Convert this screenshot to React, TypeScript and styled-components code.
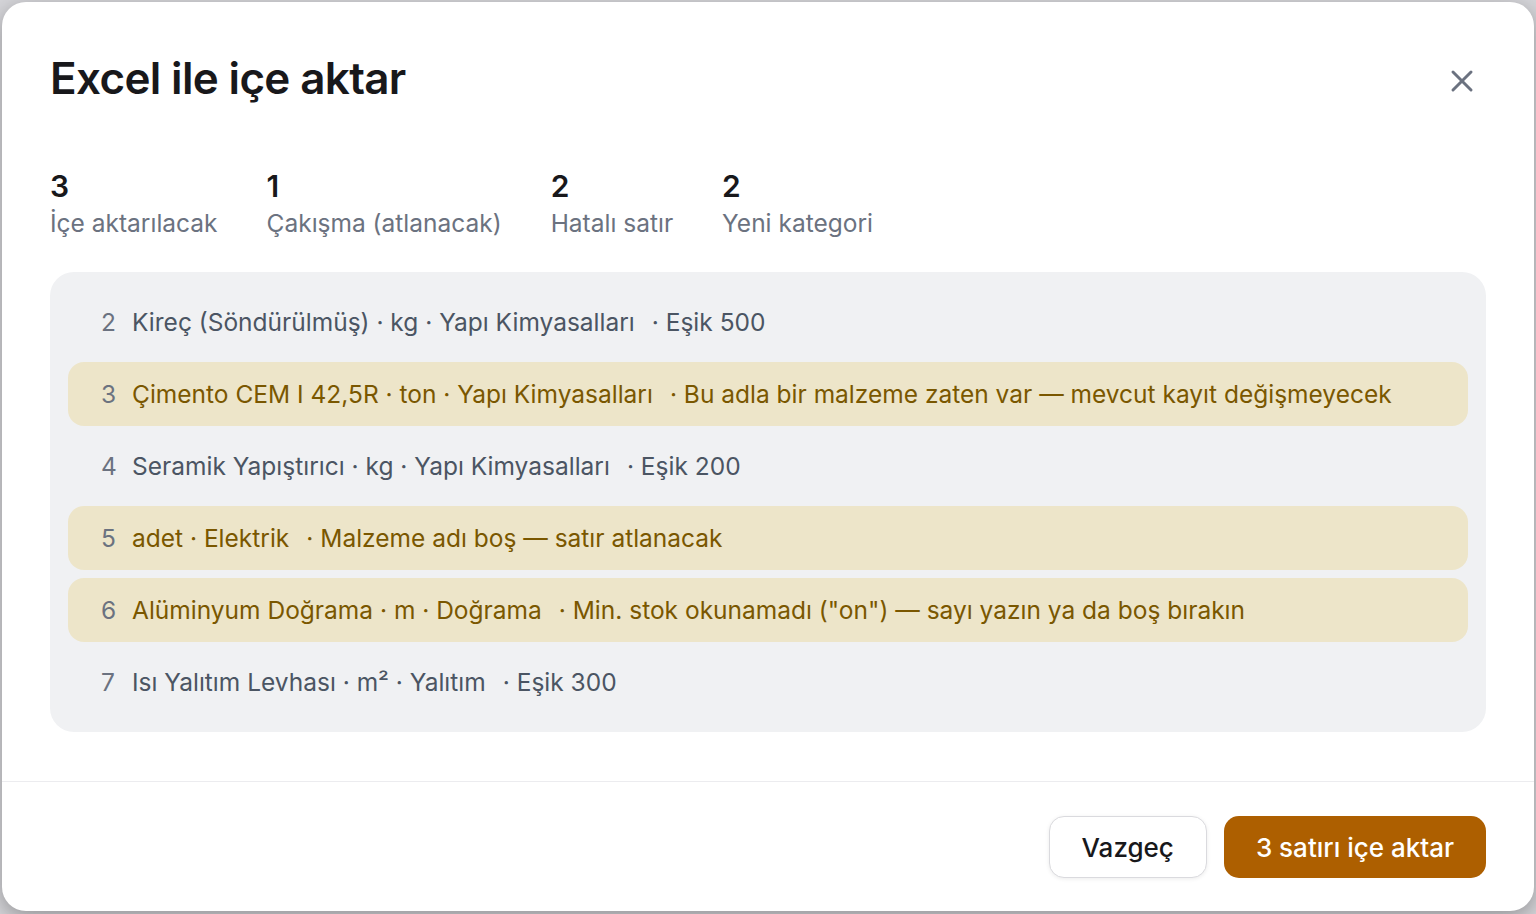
import React from 'react';
import styled, { createGlobalStyle } from 'styled-components';
import { X } from 'lucide-react';

const GlobalStyle = createGlobalStyle`
  html, body {
    margin: 0;
    padding: 0;
    height: 100%;
    overflow: hidden;
  }
  body {
    background: #d6d6da;
    font-family: Inter, "Noto Sans", "Liberation Sans", sans-serif;
    -webkit-font-smoothing: antialiased;
  }
  * { box-sizing: border-box; }
`;

interface Row {
  no: number;
  text: string;
  note: string;
  warn?: boolean;
}

const rows: Row[] = [
  { no: 2, text: 'Kireç (Söndürülmüş) · kg · Yapı Kimyasalları', note: '· Eşik 500' },
  {
    no: 3,
    text: 'Çimento CEM I 42,5R · ton · Yapı Kimyasalları',
    note: '· Bu adla bir malzeme zaten var — mevcut kayıt değişmeyecek',
    warn: true,
  },
  { no: 4, text: 'Seramik Yapıştırıcı · kg · Yapı Kimyasalları', note: '· Eşik 200' },
  { no: 5, text: 'adet · Elektrik', note: '· Malzeme adı boş — satır atlanacak', warn: true },
  {
    no: 6,
    text: 'Alüminyum Doğrama · m · Doğrama',
    note: '· Min. stok okunamadı ("on") — sayı yazın ya da boş bırakın',
    warn: true,
  },
  { no: 7, text: 'Isı Yalıtım Levhası · m² · Yalıtım', note: '· Eşik 300' },
];

const stats = [
  { value: 3, label: 'İçe aktarılacak' },
  { value: 1, label: 'Çakışma (atlanacak)' },
  { value: 2, label: 'Hatalı satır' },
  { value: 2, label: 'Yeni kategori' },
];

const Dialog = styled.div`
  margin: 2px 2px 0;
  height: 909px;
  background: #ffffff;
  border-radius: 24px;
  box-shadow: 0 6px 22px rgba(0, 0, 0, 0.32);
  display: flex;
  flex-direction: column;
  overflow: hidden;
`;

const Body = styled.div`
  padding: 51px 48px 0;
  display: flex;
  flex-direction: column;
`;

const Header = styled.div`
  display: flex;
  justify-content: space-between;
  align-items: center;
`;

const Title = styled.h2`
  margin: 0;
  font-size: 44px;
  line-height: 50px;
  font-weight: 600;
  letter-spacing: -0.015em;
  color: #18181b;
`;

const CloseButton = styled.button`
  display: flex;
  align-items: center;
  justify-content: center;
  width: 36px;
  height: 36px;
  margin: 6px 6px 0 0;
  padding: 0;
  border: none;
  background: transparent;
  color: #6b7280;
  cursor: pointer;
`;

const Stats = styled.div`
  display: flex;
  gap: 49px;
  margin-top: 64px;
`;

const Stat = styled.div`
  display: flex;
  flex-direction: column;
`;

const StatValue = styled.div`
  font-size: 30px;
  line-height: 38px;
  font-weight: 600;
  color: #18181b;
`;

const StatLabel = styled.div`
  margin-top: 2px;
  font-size: 24.5px;
  line-height: 32px;
  color: #6b7280;
`;

const List = styled.div`
  margin-top: 33px;
  padding: 18px;
  background: #f0f1f3;
  border-radius: 24px;
  display: flex;
  flex-direction: column;
  gap: 8px;
`;

const RowItem = styled.div<{ $warn?: boolean }>`
  height: 64px;
  display: flex;
  align-items: center;
  padding-left: 33px;
  border-radius: 16px;
  background: ${(p) => (p.$warn ? '#ede5c9' : 'transparent')};
  color: ${(p) => (p.$warn ? '#7a5700' : '#4b5563')};
  font-size: 24.5px;
  white-space: nowrap;
`;

const Num = styled.span`
  width: 16px;
  margin-right: 15px;
  color: #6b7280;
`;

const Note = styled.span`
  margin-left: 17px;
`;

const Footer = styled.div`
  margin-top: auto;
  border-top: 1px solid #ececef;
  padding: 34px 48px 33px;
  display: flex;
  justify-content: flex-end;
  gap: 17px;
`;

const Button = styled.button<{ $primary?: boolean }>`
  height: 62px;
  padding: 0 32px;
  border-radius: 15px;
  font-family: inherit;
  font-size: 26px;
  font-weight: 500;
  cursor: pointer;
  border: ${(p) => (p.$primary ? 'none' : '1.5px solid #dadade')};
  background: ${(p) => (p.$primary ? '#ad5f00' : '#ffffff')};
  color: ${(p) => (p.$primary ? '#ffffff' : '#18181b')};
  box-shadow: ${(p) => (p.$primary ? 'none' : '0 1px 4px rgba(0, 0, 0, 0.08)')};
`;

export default function App() {
  return (
    <>
      <GlobalStyle />
      <Dialog role="dialog" aria-label="Excel ile içe aktar">
        <Body>
          <Header>
            <Title>Excel ile içe aktar</Title>
            <CloseButton aria-label="Kapat">
              <X size={36} strokeWidth={2} />
            </CloseButton>
          </Header>
          <Stats>
            {stats.map((s) => (
              <Stat key={s.label}>
                <StatValue>{s.value}</StatValue>
                <StatLabel>{s.label}</StatLabel>
              </Stat>
            ))}
          </Stats>
          <List>
            {rows.map((r) => (
              <RowItem key={r.no} $warn={r.warn}>
                <Num>{r.no}</Num>
                <span>{r.text}</span>
                <Note>{r.note}</Note>
              </RowItem>
            ))}
          </List>
        </Body>
        <Footer>
          <Button>Vazgeç</Button>
          <Button $primary>3 satırı içe aktar</Button>
        </Footer>
      </Dialog>
    </>
  );
}
